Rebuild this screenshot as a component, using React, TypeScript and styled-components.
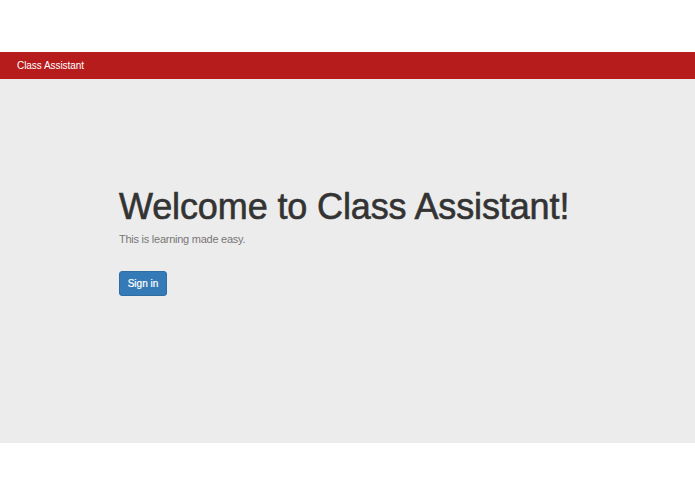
import React from "react";
import styled, { createGlobalStyle } from "styled-components";

const GlobalStyle = createGlobalStyle`
  html, body {
    margin: 0;
    padding: 0;
    background: #fff;
    font-family: "Liberation Sans", Arial, sans-serif;
  }
`;

const Page = styled.div`
  padding-top: 52px;
`;

const NavBar = styled.nav`
  height: 27px;
  background-color: #b71c1c;
  display: flex;
  align-items: center;
  padding-left: 17px;
`;

const Brand = styled.span`
  color: #fff;
  font-size: 10px;
  line-height: 27px;
  letter-spacing: -0.05px;
`;

const Jumbotron = styled.section`
  background-color: #ececec;
  height: 364px;
  box-sizing: border-box;
  padding-top: 108px;
`;

const Container = styled.div`
  width: 457px;
  margin: 0 auto;
`;

const Title = styled.h1`
  margin: 0;
  font-size: 36px;
  line-height: 40px;
  font-weight: 400;
  letter-spacing: -0.12px;
  color: #333;
  -webkit-text-stroke: 0.6px #333;
`;

const Lead = styled.p`
  margin: 4px 0 24px;
  font-size: 11px;
  line-height: 16px;
  letter-spacing: -0.25px;
  font-weight: 300;
  color: #777;
`;

const Button = styled.button`
  width: 48px;
  height: 25px;
  padding: 0;
  border: 1px solid #2e6da4;
  border-radius: 3px;
  background-color: #337ab7;
  color: #fff;
  font-family: "Liberation Sans", Arial, sans-serif;
  font-size: 10px;
  -webkit-text-stroke: 0.2px #fff;
  cursor: pointer;
`;

const App = () => {
  return (
    <Page>
      <GlobalStyle />
      <NavBar>
        <Brand>Class Assistant</Brand>
      </NavBar>
      <Jumbotron>
        <Container>
          <Title>Welcome to Class Assistant!</Title>
          <Lead>This is learning made easy.</Lead>
          <Button>Sign in</Button>
        </Container>
      </Jumbotron>
    </Page>
  );
};

export default App;
